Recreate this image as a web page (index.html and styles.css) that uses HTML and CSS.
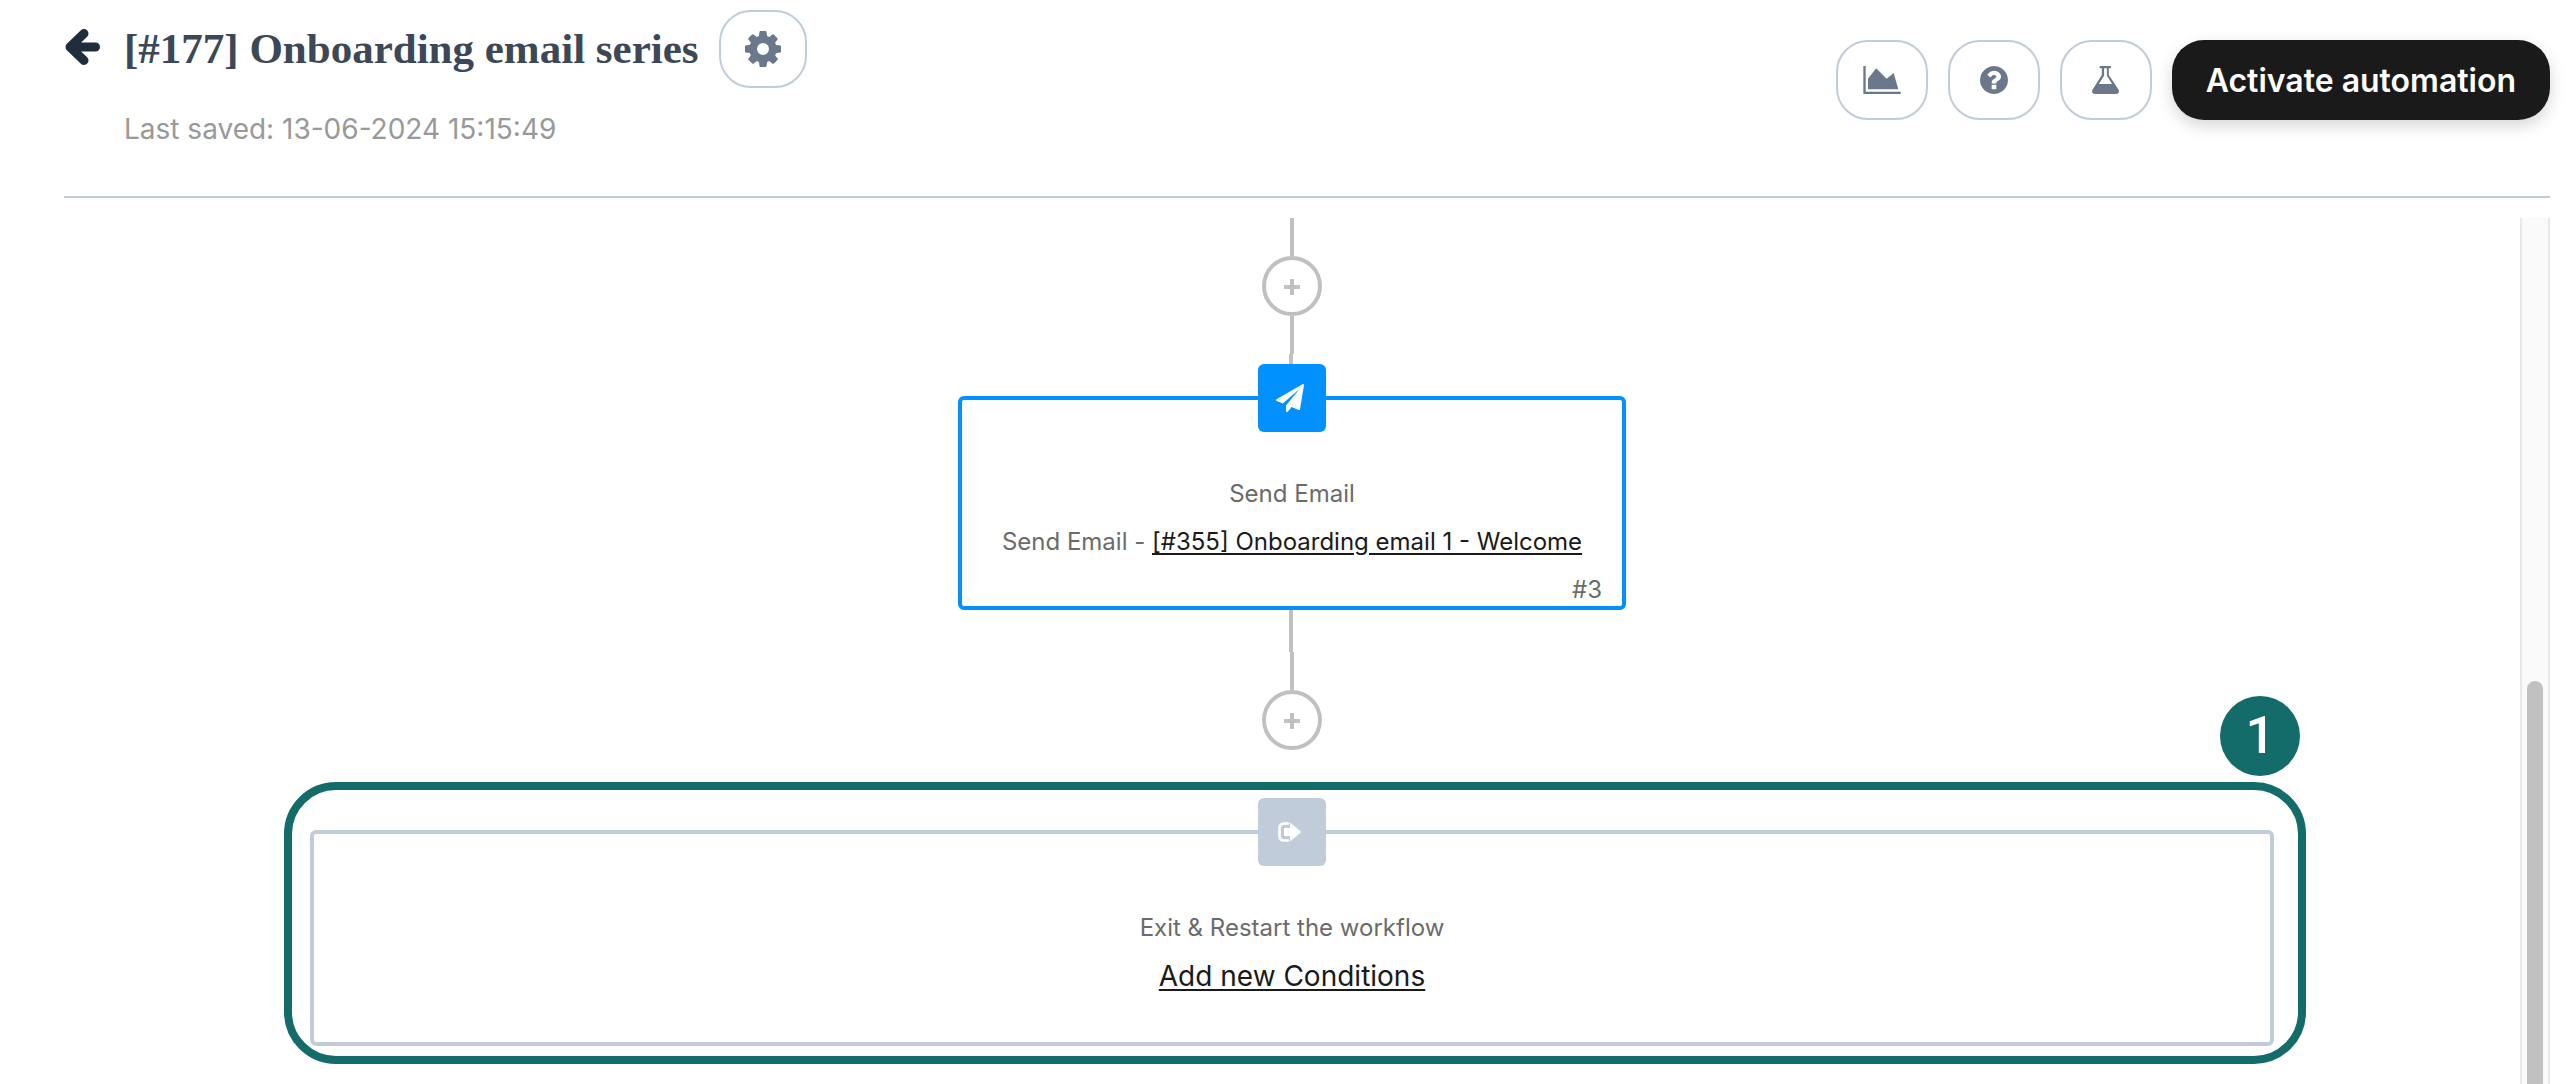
FILE: index.html
```html
<!DOCTYPE html>
<html lang="en">
<head>
    <meta charset="UTF-8">
    <title>Onboarding email series</title>
    <link rel="stylesheet" href="styles.css">
</head>
<body>
<header class="header">
    <a class="back" href="#" aria-label="Back">
        <svg viewBox="0 0 36 38" width="36" height="38"><path d="M20 5.500L6 19l14 13.500M6 19h25.500" fill="none" stroke="currentColor" stroke-width="9" stroke-linecap="round" stroke-linejoin="round"/></svg>
    </a>
    <div class="heading">
        <div class="title-row">
            <h1>[#177] Onboarding email series</h1>
            <button class="icon-btn settings" type="button" aria-label="Settings">
                <svg viewBox="0 0 1536 1536" width="36" height="36"><path d="M1024 768q0-106-75-181t-181-75-181 75-75 181 75 181 181 75 181-75 75-181zm512-109v222q0 12-8 23t-20 13l-185 28q-19 54-39 91 35 50 107 138 10 12 10 25t-9 23q-27 37-99 108t-94 71q-12 0-26-9l-138-108q-44 23-91 38-16 136-29 186-7 28-36 28H657q-14 0-24.500-8.500T621 1506l-28-184q-49-16-90-37l-141 107q-10 9-25 9-14 0-25-11-126-114-165-168-7-10-7-23 0-12 8-23 15-21 51-66.500t54-70.500q-27-50-41-99L29 913q-13-2-21-12.500T0 877V655q0-12 8-23t19-13l186-28q14-46 39-92-40-57-107-138-10-12-10-24 0-10 9-23 26-36 98.500-107.500T337 135q13 0 26 10l138 107q44-23 91-38 16-136 29-186 7-28 36-28h222q14 0 24.500 8.500T915 30l28 184q49 16 90 37l142-107q9-9 24-9 13 0 25 10 129 119 165 170 7 8 7 22 0 12-8 23-15 21-51 66.500t-54 70.500q26 50 41 98l183 28q13 2 21 12.500t8 23.500z"/></svg>
            </button>
        </div>
        <p class="saved">Last saved: 13-06-2024 15:15:49</p>
    </div>
    <div class="actions">
        <button class="icon-btn" type="button" aria-label="Statistics">
            <svg viewBox="0 0 2048 1536" width="38" height="28"><path d="M2048 1408v128H0V0h128v1408h1920zM1664 384l256 896H256V704l448-576 576 576z"/></svg>
        </button>
        <button class="icon-btn" type="button" aria-label="Help">
            <svg viewBox="0 0 1536 1536" width="28" height="28"><path d="M896 1248v-192q0-14-9-23t-23-9H672q-14 0-23 9t-9 23v192q0 14 9 23t23 9h192q14 0 23-9t9-23zm256-672q0-88-55.500-163T958 297t-170-41q-243 0-371 213-15 24 8 42l132 100q7 6 19 6 16 0 25-12 53-68 86-92 34-24 86-24 48 0 85.500 26t37.500 59q0 38-20 61t-68 45q-63 28-115.500 86.500T640 892v36q0 14 9 23t23 9h192q14 0 23-9t9-23q0-19 21.500-49.500T972 829q32-18 49-28.500t46-35 44.500-48 28-60.500 12.500-81zm384 192q0 209-103 385.500T1153.500 1433 768 1536t-385.500-103T103 1153.500 0 768t103-385.500T382.500 103 768 0t385.500 103T1433 382.500 1536 768z"/></svg>
        </button>
        <button class="icon-btn" type="button" aria-label="Test">
            <svg viewBox="0 0 1484 1536" width="27" height="28"><path d="M1449 1288q56 89 21.500 168.500T1330 1536H154q-106 0-140.500-79.500T35 1288L538 495V128h-64q-26 0-45-19t-19-45 19-45 45-19h512q26 0 45 19t19 45-19 45-45 19h-64v367zM647 563L375 992h734L837 563l-19-31V128H666v404z"/></svg>
        </button>
        <button class="activate" type="button">Activate automation</button>
    </div>
</header>

<main class="workspace">
    <div class="canvas">
        <div class="line"></div>
        <button class="add" type="button" aria-label="Add step"></button>
        <div class="line"></div>
        <div class="line line-in"></div>

        <section class="node email">
            <div class="badge">
                <svg viewBox="0 0 1792 1792" width="28" height="28"><path d="M1764 11q33 24 27 64l-256 1536q-5 29-32 45-14 8-31 8-11 0-24-5l-453-185-242 295q-18 23-49 23-13 0-22-4-19-7-30.500-23.500T640 1728v-349l864-1059-1069 925-395-162q-37-14-40-55-2-40 32-59L1696 9q15-9 32-9 20 0 36 11z"/></svg>
            </div>
            <p>Send Email</p>
            <p>Send Email - <a href="#">[#355] Onboarding email 1 - Welcome</a></p>
            <p class="number">#3</p>
        </section>

        <div class="line line-out"></div>
        <div class="line"></div>
        <button class="add" type="button" aria-label="Add step"></button>

        <section class="node exit">
            <div class="badge">
                <svg viewBox="0 0 24 20" width="24" height="20"><path d="M10 1.500H6Q1.500 1.500 1.500 6v8q0 4.500 4.500 4.500h4" fill="none" stroke="#fff" stroke-width="2.600" stroke-linecap="round"/><path d="M7 6h5V2q0-1.800 1.300-.600l9.200 7.800q.8.800 0 1.600l-9.200 7.800q-1.300 1.200-1.300-.600V14H7q-1 0-1-1V7q0-1 1-1z"/></svg>
            </div>
            <p>Exit &amp; Restart the workflow</p>
            <p class="conditions"><a href="#">Add new Conditions</a></p>
            <div class="highlight"><span class="step">1</span></div>
        </section>
    </div>
    <div class="scrollbar"><div class="thumb"></div></div>
</main>
</body>
</html>
```
FILE: styles.css
```css
* {
    box-sizing: border-box;
    margin: 0;
    padding: 0;
}

body {
    display: flex;
    flex-direction: column;
    height: 100vh;
    padding: 0 20px 0 64px;
    background-color: #fff;
    font-family: Inter, "Liberation Sans", sans-serif;
    font-size: 24px;
    color: #1a1a1a;
    overflow: hidden;
}

button {
    font-family: inherit;
    cursor: pointer;
}

svg {
    display: block;
    fill: currentColor;
}

a {
    color: #1a1a1a;
    text-underline-offset: 3px;
}

/* header */
.header {
    display: flex;
    align-items: flex-start;
    height: 198px;
    border-bottom: 2px solid #c0ccda;
}

.back {
    margin-top: 28px;
    color: #1f2d3d;
}

.heading {
    flex: 1;
    margin: 10px 0 0 24px;
}

.title-row {
    display: flex;
    align-items: center;
    gap: 20px;
}

h1 {
    font-family: "Liberation Serif", serif;
    font-size: 43px;
    line-height: 76px;
    color: #3c4858;
    white-space: nowrap;
}

.icon-btn {
    display: flex;
    align-items: center;
    justify-content: center;
    width: 92px;
    height: 80px;
    border: 2px solid #c0ccda;
    border-radius: 32px;
    background-color: #fff;
    color: #6b778a;
}

.settings {
    width: 88px;
    height: 78px;
}

.saved {
    margin-top: 21px;
    font-size: 28px;
    line-height: 40px;
    color: #999;
}

.actions {
    display: flex;
    gap: 20px;
    margin-top: 40px;
}

.activate {
    padding: 0 34px;
    border: none;
    border-radius: 32px;
    background-color: #1a1a1a;
    box-shadow: 0 6px 16px rgba(0, 0, 0, .16);
    color: #fff;
    font-size: 32px;
    font-weight: 600;
}

/* workflow */
.workspace {
    display: flex;
    flex: 1;
    margin-top: 20px;
    min-height: 0;
}

.canvas {
    display: flex;
    flex: 1;
    flex-direction: column;
    align-items: center;
}

.line {
    width: 4px;
    height: 38px;
    background-color: #c0c0c0;
}

.line-in {
    height: 10px;
    margin-right: 2px;
}

.line-out {
    height: 42px;
    margin-right: 2px;
}

.add {
    position: relative;
    width: 60px;
    height: 60px;
    border: 4px solid #c0c0c0;
    border-radius: 50%;
    background-color: #fff;
}

.add::before,
.add::after {
    content: "";
    position: absolute;
    top: 25px;
    left: 18px;
    width: 16px;
    height: 4px;
    border-radius: 1px;
    background-color: #c0c0c0;
}

.add::after {
    transform: rotate(90deg);
}

.node {
    position: relative;
    border: 4px solid;
    border-radius: 6px;
    text-align: center;
    line-height: 48px;
}

.node p {
    color: #6b6b6b;
}

.badge {
    display: flex;
    align-items: center;
    justify-content: center;
    width: 68px;
    height: 68px;
    margin: -36px auto 38px;
    padding-right: 4px;
    border-radius: 6px;
    color: #fff;
}

.email {
    margin-top: 32px;
    padding: 0 20px;
    border-color: #0090ff;
}

.email p {
    padding: 0 20px;
}

.email .badge {
    background-color: #0090ff;
}

.email .number {
    margin-bottom: -8px;
    padding: 0;
    text-align: right;
}

.exit {
    width: 80%;
    margin-top: 80px;
    padding-bottom: 42px;
    border-color: #c0ccda;
}

.exit .badge {
    background-color: #c0ccda;
}

.exit .conditions {
    font-size: 28px;
}

/* callout round the exit step */
.highlight {
    position: absolute;
    top: -52px;
    right: -36px;
    bottom: -22px;
    left: -30px;
    border: 8px solid #136c6a;
    border-radius: 52px;
    pointer-events: none;
}

.step {
    position: absolute;
    top: -94px;
    right: -2px;
    width: 80px;
    height: 80px;
    border-radius: 50%;
    background-color: #136c6a;
    color: #fff;
    font-family: Roboto, sans-serif;
    font-size: 52px;
    font-weight: 500;
    line-height: 80px;
}

.scrollbar {
    width: 30px;
    padding: 463px 5px 0;
    border: solid #e8e8e8;
    border-width: 0 2px;
    background-color: #fafafa;
}

.thumb {
    height: 100%;
    border-radius: 8px 8px 0 0;
    background-color: #c1c1c1;
}
```
